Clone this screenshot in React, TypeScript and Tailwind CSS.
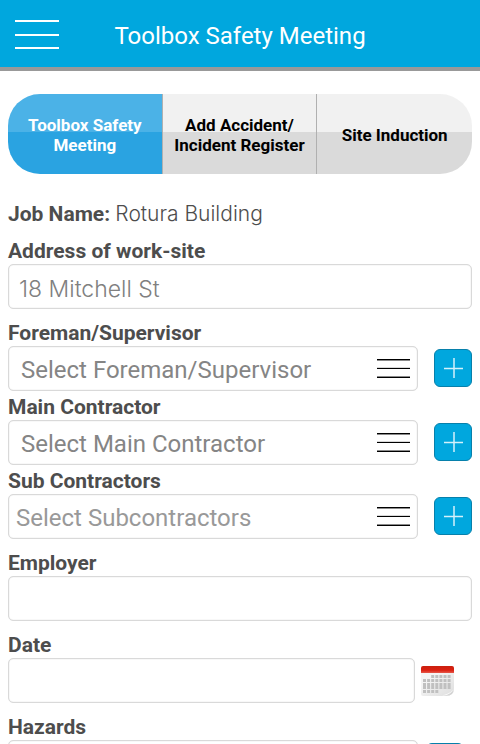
import { useState, type ReactNode } from "react";
import { clsx } from "clsx";

const tabs = ["Toolbox Safety Meeting", "Add Accident/ Incident Register", "Site Induction"];

const labelClass = "block text-[21px] leading-[26px] font-bold text-[#4d4d4d]";
const boxClass =
  "block w-full h-[45px] appearance-none rounded-[5px] border border-[#d9d9d9] bg-white shadow-[inset_0_0_1px_#bbbbbb] outline-none";

function Header() {
  return (
    <header className="relative flex h-[71px] items-center justify-center border-b-4 border-[#999999] bg-[#00a7de]">
      <button type="button" aria-label="Menu" className="absolute left-[15px] top-[19px]">
        <svg width="44" height="31" viewBox="0 0 44 31" fill="#fff" className="block">
          <path d="M0 1h44v2H0zM0 15h44v2H0zM0 28h44v2H0z" />
        </svg>
      </button>
      <h1 className="pt-1 text-2xl text-white">Toolbox Safety Meeting</h1>
    </header>
  );
}

function Tabs() {
  const [active, setActive] = useState(0);

  return (
    <nav className="grid h-20 grid-cols-3 overflow-hidden rounded-[32px]">
      {tabs.map((tab, i) => (
        <button
          key={tab}
          type="button"
          onClick={() => setActive(i)}
          className={clsx(
            "px-2 pt-0.5 text-[17px] leading-5 font-bold",
            i < tabs.length - 1 && "border-r border-[#b0b0b0]",
            i === active
              ? "bg-[linear-gradient(#4bb2e7_0_38px,#2aa3e1_38px)] text-white"
              : "bg-[linear-gradient(#f1f1f1_0_38px,#dadada_38px)] text-black"
          )}
        >
          {tab}
        </button>
      ))}
    </nav>
  );
}

function AddButton({ label }: { label: string }) {
  return (
    <button
      type="button"
      aria-label={label}
      className="mt-[3px] flex size-[38px] shrink-0 items-center justify-center rounded-md border border-[#0780ab] bg-[#00a7de]"
    >
      <svg width="20" height="20" viewBox="0 0 20 20" fill="none" stroke="#d4f1fb" strokeWidth="1.5">
        <path d="M11 0v20M1 10.5h19" />
      </svg>
    </button>
  );
}

function Field({ id, label, children }: { id: string; label: string; children: ReactNode }) {
  return (
    <div>
      <label htmlFor={id} className={labelClass}>
        {label}
      </label>
      {children}
    </div>
  );
}

type SelectFieldProps = {
  id: string;
  label: string;
  placeholder: string;
  className?: string;
  narrow?: boolean;
};

function SelectField({ id, label, placeholder, className = "pl-3 text-[#858585]", narrow }: SelectFieldProps) {
  return (
    <Field id={id} label={label}>
      <div className={clsx("flex items-start", narrow ? "gap-2 pr-2" : "gap-4")}>
        <div className="relative flex-1">
          <select id={id} className={clsx(boxClass, "pt-0.5 pr-12 text-2xl", className)}>
            <option>{placeholder}</option>
          </select>
          {/* list icon over the select */}
          <svg
            width="33"
            height="20"
            viewBox="0 0 33 20"
            className="pointer-events-none absolute right-2 top-[13px]"
          >
            <path d="M0 0h33v1H0zM0 9h33v1H0zM0 18h33v1H0z" fill="#000" />
            <path d="M0 1h33v1H0zM0 17h33v1H0z" fill="#8a8a8a" />
            <path d="M0 8h33v1H0z" fill="#d8d8d8" />
          </svg>
        </div>
        <AddButton label={`Add ${label}`} />
      </div>
    </Field>
  );
}

function CalendarIcon() {
  const rows = [
    { y: 9, from: 2, to: 6 },
    { y: 13, from: 0, to: 6 },
    { y: 17, from: 0, to: 6 },
    { y: 20, from: 0, to: 6 },
    { y: 24, from: 0, to: 3 },
  ];

  return (
    <svg width="33" height="30" viewBox="0 0 33 30" className="block">
      <defs>
        <linearGradient id="paper" x1="0" y1="0" x2="1" y2="1">
          <stop offset="0.3" stopColor="#f4f4f4" />
          <stop offset="0.85" stopColor="#e2e2e2" />
          <stop offset="1" stopColor="#b8b8b8" />
        </linearGradient>
        <linearGradient id="band" x1="0" y1="0" x2="0" y2="1">
          <stop offset="0" stopColor="#c9200f" />
          <stop offset="0.6" stopColor="#dc1f10" />
          <stop offset="1" stopColor="#e5584a" />
        </linearGradient>
      </defs>
      <path d="M0 5h33v17q0 8-8 8H2q-2 0-2-2z" fill="url(#paper)" />
      <path d="M33 21q-1 6-12 8.500q10 0 12-8.500z" fill="#fafafa" />
      <path d="M0 7V2q0-2 2-2h29q2 0 2 2v5z" fill="url(#band)" />
      {rows.map(({ y, from, to }) =>
        Array.from({ length: to - from + 1 }, (_, i) => (
          <rect key={`${y}-${i}`} x={2 + (from + i) * 4.1} y={y} width="3" height="3" fill="#c0c0c0" />
        ))
      )}
    </svg>
  );
}

export default function App() {
  return (
    <div className="h-screen overflow-y-auto bg-white font-['Roboto',sans-serif] [scrollbar-width:none]">
      <Header />

      <main className="px-2 pt-[23px] pb-6">
        <Tabs />

        <p className="mt-[27px] text-[21px] leading-[26px] font-bold text-[#4d4d4d]">
          Job Name: <span className="font-['Inter','Roboto',sans-serif] font-light">Rotura Building</span>
        </p>

        <form className="mt-[11px] flex flex-col gap-[11px]">
          <Field id="address" label="Address of work-site">
            <input
              id="address"
              type="text"
              defaultValue="18 Mitchell St"
              className={clsx(boxClass, "px-[10px] pt-1 font-['Inter','Roboto',sans-serif] text-[23px] font-light text-[#808080]")}
            />
          </Field>

          <div className="flex flex-col gap-[3px]">
            <SelectField id="foreman" label="Foreman/Supervisor" placeholder="Select Foreman/Supervisor" />
            <SelectField id="main-contractor" label="Main Contractor" placeholder="Select Main Contractor" />
            <SelectField
              id="sub-contractors"
              label="Sub Contractors"
              placeholder="Select Subcontractors"
              className="pl-[7px] text-[#999999]"
            />
          </div>

          <Field id="employer" label="Employer">
            <input id="employer" type="text" className={clsx(boxClass, "px-[10px] text-2xl")} />
          </Field>

          <Field id="date" label="Date">
            <div className="flex items-center gap-[6px] pr-[18px]">
              <input id="date" type="text" className={clsx(boxClass, "px-[10px] text-2xl")} />
              <button type="button" aria-label="Pick a date" className="shrink-0">
                <CalendarIcon />
              </button>
            </div>
          </Field>

          <SelectField id="hazards" label="Hazards" placeholder="Select Hazards" narrow />
        </form>
      </main>
    </div>
  );
}
